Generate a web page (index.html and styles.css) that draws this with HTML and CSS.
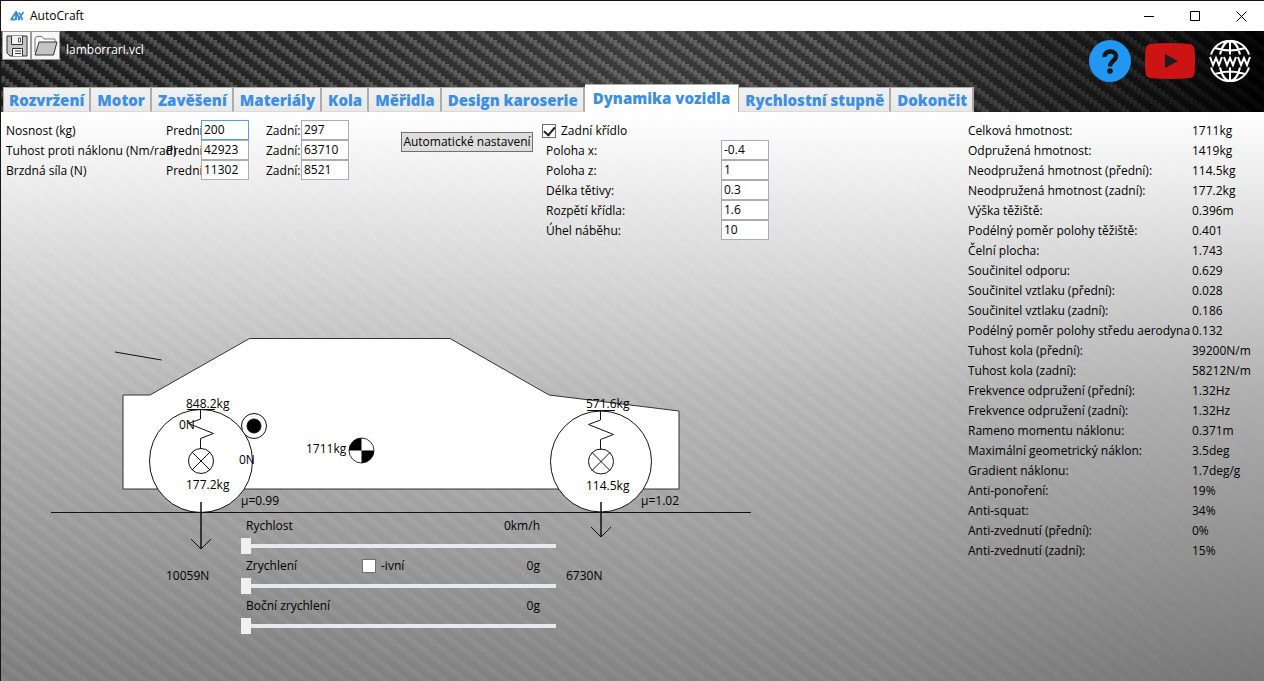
FILE: index.html
```html
<!DOCTYPE html>
<html lang="cs">
<head>
<meta charset="utf-8">
<title>AutoCraft</title>
<link rel="stylesheet" href="styles.css">
</head>
<body>
<div class="window">
  <div class="titlebar">
    <svg class="app-icon" width="14" height="10" viewBox="0 0 14 10" aria-hidden="true"><path d="M.5 8.500h5M1 8.500L6 1v8M6.500 1l3 8M13.500 1L8 9M9 1.500l1.500 2.500M11 6l1.500 3" fill="none" stroke="#3d8ad8" stroke-width="1.800"/></svg>
    <span class="app-name">AutoCraft</span>
    <div class="window-buttons">
      <button class="window-button" type="button" aria-label="Minimalizovat"><svg width="11" height="11" viewBox="0 0 11 11"><path d="M0 5.500h10" stroke="#000"/></svg></button>
      <button class="window-button" type="button" aria-label="Maximalizovat"><svg width="11" height="11" viewBox="0 0 11 11"><path d="M.5.5h9v9h-9z" fill="none" stroke="#000"/></svg></button>
      <button class="window-button" type="button" aria-label="Zavřít"><svg width="11" height="11" viewBox="0 0 11 11"><path d="M.5.5l10 10M10.500.5l-10 10" stroke="#000"/></svg></button>
    </div>
  </div>

  <div class="workspace">
    <svg class="carbon" aria-hidden="true">
      <defs>
        <pattern id="weave" width="20" height="15" patternUnits="userSpaceOnUse">
          <g fill="#fff" fill-opacity=".16">
            <path d="M0 0h4v7H0zM4 3h4v7H4zM8 6h4v7H8zM12 9h4v6h-4zM12 0h4v1h-4zM16 12h4v3h-4zM16 0h4v4h-4z"/>
          </g>
          <g fill="#fff" fill-opacity=".12">
            <path d="M1 0h3v5H1zM5 3h3v5H5zM9 6h3v5H9zM13 9h3v5h-3zM17 12h3v3h-3zM17 0h3v2h-3z"/>
          </g>
        </pattern>
      </defs>
      <rect width="100%" height="100%" fill="url(#weave)"/>
    </svg>

    <header class="header">
      <div class="toolbar">
        <button class="tool" type="button" aria-label="Uložit"><svg width="24" height="24" viewBox="0 0 24 24"><path d="M2 2h20v20H5l-3-3z" fill="#c4c4c4" stroke="#333"/><path d="M6.500 2v8.500h11V2" fill="#f4f4f4" stroke="#333"/><path d="M13.500 4h2v4h-2z" fill="#fff" stroke="#555"/><path d="M7.500 22v-7.500h10V22" fill="#fff" stroke="#333"/><path d="M10 17h6M10 19.500h6" stroke="#333"/></svg></button>
        <button class="tool" type="button" aria-label="Otevřít"><svg width="26" height="24" viewBox="0 0 26 24"><path d="M2 18V4l2-1.500h5L11 5h11v3" fill="#fff" stroke="#777"/><path d="M6 8h18l-3.500 13H2z" fill="#c4c4c4" stroke="#333"/></svg></button>
        <span class="filename">lamborrari.vcl</span>
      </div>
      <nav class="tabs">
        <button class="tab" type="button">Rozvržení</button>
        <button class="tab" type="button">Motor</button>
        <button class="tab" type="button">Zavěšení</button>
        <button class="tab" type="button">Materiály</button>
        <button class="tab" type="button">Kola</button>
        <button class="tab" type="button">Měřidla</button>
        <button class="tab" type="button">Design karoserie</button>
        <button class="tab tab-active" type="button">Dynamika vozidla</button>
        <button class="tab" type="button">Rychlostní stupně</button>
        <button class="tab" type="button">Dokončit</button>
      </nav>
      <div class="links">
        <a href="#help" aria-label="Nápověda"><svg width="42" height="42" viewBox="0 0 42 42"><circle cx="21" cy="21" r="21" fill="#2196f3"/><path d="M15.500 17c-.5-7 12-7.500 11.500-.5-.3 4.500-6 4.500-6 10" fill="none" stroke="#151515" stroke-width="4.400"/><circle cx="21" cy="31" r="2.800" fill="#151515"/></svg></a>
        <a href="#video" aria-label="YouTube"><svg width="50" height="36" viewBox="0 0 50 36"><path d="M5 1Q25-1 45 1q4 1 4.500 5 1 12 0 24-.5 4-4.500 5-20 2-40 0-4-1-4.500-5-1-12 0-24Q1 2 5 1z" fill="#cd1414"/><path d="M20 11v14l13-7z" fill="#1c1c1c"/></svg></a>
        <a href="#web" aria-label="Web"><svg width="42" height="42" viewBox="0 0 42 42" fill="none" stroke="#fff" stroke-width="2"><path d="M2 14.500a20 20 0 0 1 38 0M2 27.500a20 20 0 0 0 38 0M21 1v13.500M21 27.500V41M11 14.500C13 6 17 1 21 1s8 5 10 13.500M11 27.500C13 36 17 41 21 41s8-5 10-13.500M6 8q15 5 30 0M6 34q15-5 30 0"/><path d="M1 17l3 8 3-7 3 7 3-8M15 17l3 8 3-7 3 7 3-8M29 17l3 8 3-7 3 7 3-8"/></svg></a>
      </div>
    </header>

    <main class="page">
      <section class="vehicle">
        <div class="settings">
          <div class="axles">
            <span>Nosnost (kg)</span>
            <label for="load-front">Prední:</label><input class="field field-focus" id="load-front" value="200">
            <label for="load-rear">Zadní:</label><input class="field" id="load-rear" value="297">
            <span>Tuhost proti náklonu (Nm/rad)</span>
            <label for="roll-front">Prední:</label><input class="field" id="roll-front" value="42923">
            <label for="roll-rear">Zadní:</label><input class="field" id="roll-rear" value="63710">
            <span>Brzdná síla (N)</span>
            <label for="brake-front">Prední:</label><input class="field" id="brake-front" value="11302">
            <label for="brake-rear">Zadní:</label><input class="field" id="brake-rear" value="8521">
          </div>
          <button class="auto" type="button">Automatické nastavení</button>
          <div class="wing">
            <label class="check-label"><input class="check" type="checkbox" checked>Zadní křídlo</label>
            <div class="wing-grid">
              <label for="wing-x">Poloha x:</label><input class="field" id="wing-x" value="-0.4">
              <label for="wing-z">Poloha z:</label><input class="field" id="wing-z" value="1">
              <label for="wing-chord">Délka tětivy:</label><input class="field" id="wing-chord" value="0.3">
              <label for="wing-span">Rozpětí křídla:</label><input class="field" id="wing-span" value="1.6">
              <label for="wing-angle">Úhel náběhu:</label><input class="field" id="wing-angle" value="10">
            </div>
          </div>
        </div>

        <div class="stage">
          <svg class="diagram" width="800" height="400" viewBox="1 240 800 400" fill="none" stroke="#111">
            <path d="M123 395h27l99.500-56.500H450L549 395l130 16v78H123z" fill="#fff" stroke="#333"/>
            <path d="M115 352l46.500 8"/>
            <circle cx="201" cy="461" r="51.500" fill="#fff"/>
            <circle cx="601" cy="461.500" r="50.500" fill="#fff"/>
            <path d="M51 512.500h700"/>
            <path d="M187 409.500h28M200.500 410v9l-12 4.500 25 10-13 5v10M587 410.500h28M600.500 411v9l-12 4.500 25 10-13 5v10"/>
            <circle cx="201" cy="461" r="12.500"/>
            <circle cx="601" cy="461.500" r="12.500"/>
            <path d="M192 452l18 18M210 452l-18 18M592 452.500l18 18M610 452.500l-18 18"/>
            <path d="M201 502v47M601 502v35" stroke-width="1.500"/>
            <path d="M191 539l10 10 10-10M591 527l10 10 10-10"/>
            <circle cx="254" cy="426" r="12.500" fill="#fff"/>
            <circle cx="254" cy="426" r="7" fill="#000"/>
            <circle cx="361.500" cy="450.500" r="12.500" fill="#fff" stroke="#333"/>
            <path d="M361.500 450.500v-12.500a12.500 12.500 0 0 0-12.500 12.500zM361.500 450.500v12.500a12.500 12.500 0 0 0 12.500-12.500z" fill="#000" stroke="none"/>
            <g class="diagram-text" fill="#000" stroke="none">
              <text x="186" y="408">848.2kg</text>
              <text x="179" y="429">0N</text>
              <text x="239" y="464">0N</text>
              <text x="186" y="489">177.2kg</text>
              <text x="306" y="453">1711kg</text>
              <text x="241" y="505">μ=0.99</text>
              <text x="166" y="580">10059N</text>
              <text x="586" y="408">571.6kg</text>
              <text x="586" y="490">114.5kg</text>
              <text x="641" y="505">μ=1.02</text>
              <text x="566" y="580">6730N</text>
            </g>
          </svg>
          <div class="sliders">
            <div class="slider-head"><label for="speed">Rychlost</label><output>0km/h</output></div>
            <input class="slider" id="speed" type="range" value="0">
            <div class="slider-head"><label for="accel">Zrychlení</label><label class="check-label negative"><input class="check" type="checkbox">-ivní</label><output>0g</output></div>
            <input class="slider" id="accel" type="range" value="0">
            <div class="slider-head"><label for="lateral">Boční zrychlení</label><output>0g</output></div>
            <input class="slider" id="lateral" type="range" value="0">
          </div>
        </div>
      </section>

      <dl class="stats">
        <dt>Celková hmotnost:</dt><dd>1711kg</dd>
        <dt>Odpružená hmotnost:</dt><dd>1419kg</dd>
        <dt>Neodpružená hmotnost (přední):</dt><dd>114.5kg</dd>
        <dt>Neodpružená hmotnost (zadní):</dt><dd>177.2kg</dd>
        <dt>Výška těžiště:</dt><dd>0.396m</dd>
        <dt>Podélný poměr polohy těžiště:</dt><dd>0.401</dd>
        <dt>Čelní plocha:</dt><dd>1.743</dd>
        <dt>Součinitel odporu:</dt><dd>0.629</dd>
        <dt>Součinitel vztlaku (přední):</dt><dd>0.028</dd>
        <dt>Součinitel vztlaku (zadní):</dt><dd>0.186</dd>
        <dt>Podélný poměr polohy středu aerodyna</dt><dd>0.132</dd>
        <dt>Tuhost kola (přední):</dt><dd>39200N/m</dd>
        <dt>Tuhost kola (zadní):</dt><dd>58212N/m</dd>
        <dt>Frekvence odpružení (přední):</dt><dd>1.32Hz</dd>
        <dt>Frekvence odpružení (zadní):</dt><dd>1.32Hz</dd>
        <dt>Rameno momentu náklonu:</dt><dd>0.371m</dd>
        <dt>Maximální geometrický náklon:</dt><dd>3.5deg</dd>
        <dt>Gradient náklonu:</dt><dd>1.7deg/g</dd>
        <dt>Anti-ponoření:</dt><dd>19%</dd>
        <dt>Anti-squat:</dt><dd>34%</dd>
        <dt>Anti-zvednutí (přední):</dt><dd>0%</dd>
        <dt>Anti-zvednutí (zadní):</dt><dd>15%</dd>
      </dl>
    </main>
  </div>
</div>
</body>
</html>
```

FILE: styles.css
```css
* { box-sizing: border-box; }

body {
  margin: 0;
  font: 12px/20px "Open Sans", "Noto Sans", sans-serif;
  color: #000;
}

button, input { font: inherit; color: inherit; }

.window {
  display: flex;
  flex-direction: column;
  min-height: 100vh;
  border: solid #15151a;
  border-width: 1px 0 0 1px;
}

.titlebar {
  display: flex;
  align-items: center;
  height: 30px;
  padding-left: 9px;
  background: #fff;
}

.app-name { margin-left: 6px; }

.window-buttons { display: flex; margin-left: auto; }

.window-button {
  display: grid;
  place-items: center;
  width: 46px;
  height: 29px;
  padding: 0;
  border: 0;
  background: none;
}

.workspace {
  position: relative;
  display: flex;
  flex: 1;
  flex-direction: column;
  background: linear-gradient(90deg, #1c1c1c, #2a2a2a 25%, #3c3c3c 50%, #303030 70%, #141414 88%, #000);
}

.carbon {
  position: absolute;
  inset: 0;
  width: 100%;
  height: 100%;
  mask-image: linear-gradient(90deg, #000c 65%, #0005 90%, #0002);
}

.header {
  position: relative;
  display: grid;
  grid-template-columns: 1fr auto;
  grid-template-rows: 1fr auto;
  height: 81px;
}

.toolbar {
  display: flex;
  align-items: flex-start;
  padding-left: 1px;
}

.tool {
  display: grid;
  place-items: center;
  width: 29px;
  height: 29px;
  padding: 0;
  border: 1px solid #999;
  background: #f6f6f6;
}

.filename { padding: 9px 0 0 6px; color: #fff; }

.tabs {
  display: flex;
  grid-row: 2;
  align-items: flex-end;
  padding-left: 2px;
  white-space: nowrap;
}

.tab {
  height: 25px;
  padding: 0 5px;
  border: 1px solid #acacac;
  border-right-width: 2px;
  border-bottom-color: #d9d9d9;
  background: linear-gradient(#f1f1f1, #e8e8e8);
  color: #3d8fe0;
  font: 800 15px/22px "Open Sans", "Noto Sans", sans-serif;
}

.tab + .tab { border-left-width: 0; padding-left: 6px; }

.tab.tab-active {
  height: 28px;
  padding: 0 8px 2px;
  border-right-width: 1px;
  border-bottom: 0;
  background: #fff;
}

.links {
  display: flex;
  grid-row: 1 / 3;
  grid-column: 2;
  gap: 14px;
  align-items: center;
  padding: 0 13px 21px 0;
}

.links a, .links svg { display: block; }

.page {
  position: relative;
  display: grid;
  flex: 1;
  grid-template-columns: 1fr 294px;
  padding-top: 8px;
  background: linear-gradient(#fff, rgba(205, 205, 205, .85) 50%, rgba(148, 148, 148, .8));
}

.settings { display: flex; align-items: flex-start; }

.axles {
  display: grid;
  grid-template-columns: 160px 35px 48px 17px 35px 48px;
  grid-auto-rows: 20px;
  width: 395px;
  padding: 0 0 0 5px;
  line-height: 22px;
  white-space: nowrap;
}

.axles label:nth-of-type(even) { grid-column: 5; }

.field {
  position: relative;
  width: 48px;
  height: 20px;
  padding: 0 2px;
  border: 1px solid #abadb3;
  background: #fff;
}

.field-focus { border-color: #569de5; }

.auto {
  width: 132px;
  height: 20px;
  margin: 12px 8px 0 5px;
  padding: 0;
  border: 1px solid #707070;
  background: #ddd;
  line-height: 18px;
  white-space: nowrap;
}

.check-label { display: flex; align-items: center; height: 20px; }

.check {
  display: grid;
  place-items: center;
  appearance: none;
  width: 14px;
  height: 14px;
  margin: 0 5px 0 0;
  border: 1px solid #707070;
  background: #fff;
}

.check:checked::before {
  width: 5px;
  height: 9px;
  border: solid #212121;
  border-width: 0 2px 2px 0;
  content: "";
  transform: rotate(40deg) translate(-1px, -1px);
}

.wing .check-label { padding: 2px 0 0 1px; }

.wing-grid {
  display: grid;
  grid-template-columns: 175px 48px;
  grid-auto-rows: 20px;
  padding-left: 5px;
  line-height: 22px;
}

.stage { display: grid; }
.diagram { grid-area: 1 / 1; }
.diagram-text { font-size: 12px; }

.sliders {
  z-index: 1;
  grid-area: 1 / 1;
  width: 315px;
  margin: 276px 0 0 240px;
}

.slider-head {
  display: flex;
  justify-content: space-between;
  position: relative;
  padding: 0 16px 0 5px;
}

.negative { position: absolute; left: 121px; }

.slider {
  display: block;
  appearance: none;
  width: 100%;
  height: 20px;
  margin: 0;
  background: linear-gradient(#e7eaea, #e7eaea) center / 100% 4px no-repeat;
}

.slider::-webkit-slider-thumb {
  appearance: none;
  width: 10px;
  height: 16px;
  background: #f0f0f0;
}

.stats {
  display: grid;
  grid-template-columns: 210px 1fr;
  grid-auto-rows: 20px;
  column-gap: 14px;
  align-content: start;
  margin: 0 0 0 -2px;
  line-height: 22px;
  white-space: nowrap;
}

.stats dd { margin: 0; }
```
